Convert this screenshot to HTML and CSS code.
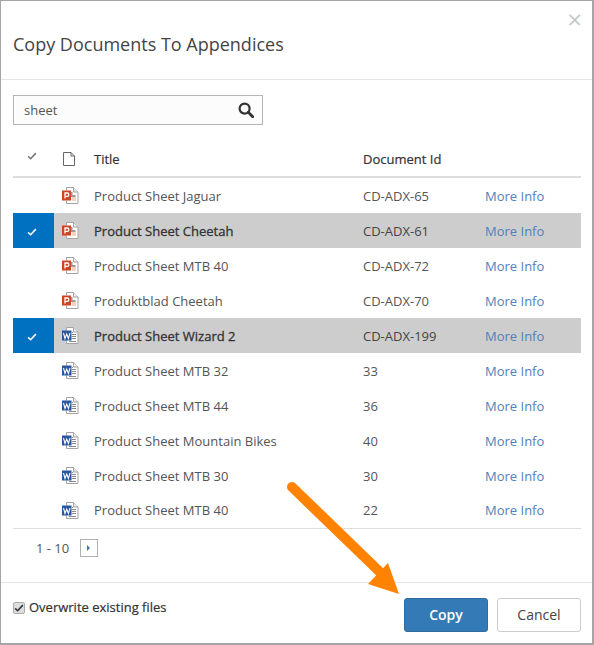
FILE: index.html
```html
<!DOCTYPE html>
<html lang="en">
<head>
    <meta charset="UTF-8">
    <title>Copy Documents To Appendices</title>
    <link rel="stylesheet" href="styles.css">
</head>
<body>
    <svg class="sprites" width="0" height="0">
        <symbol id="tick" viewBox="0 0 12 10">
            <path d="M1.2 5.4 4.3 8.4 10.8 1.4" fill="none" stroke="currentColor" stroke-width="2"/>
        </symbol>
        <symbol id="ppt" viewBox="0 0 17 17">
            <path d="M4.5 3.500V.5h7l4.500 4.500v11.500H4.500V13.500" fill="#fff" stroke="#a3a3a3"/>
            <path d="M11.500.5V5H16" fill="#eee" stroke="#a3a3a3"/>
            <path d="M8.500 5h2v3h3v2h-5z" fill="#9a9a9a"/>
            <path d="M10 11h4M10 13h4" stroke="#f0a585"/>
            <rect x="0" y="3.500" width="9" height="10" fill="#d04423"/>
            <path d="M3 11.500V6h2.200a1.600 1.600 0 0 1 0 3.400H3" fill="none" stroke="#fff" stroke-width="1.300"/>
        </symbol>
        <symbol id="doc" viewBox="0 0 17 17">
            <path d="M4.500 3.500V.5h7l4.500 4.500v11.500H4.500V13.500" fill="#fff" stroke="#a3a3a3"/>
            <path d="M11.500.5V5H16" fill="#eee" stroke="#a3a3a3"/>
            <path d="M10 5.500h1M10 7.500h4M10 9.500h4M10 11.500h4M7 14.500h7" stroke="#8a8a8a"/>
            <rect x="0" y="3.500" width="9.500" height="10" fill="#27569f"/>
            <path d="M1.500 6 3 11.500 4.700 7 6.400 11.500 8 6" fill="none" stroke="#fff" stroke-width="1.100"/>
        </symbol>
    </svg>

    <div class="dialog">
        <header class="dialog-head">
            <h1>Copy Documents To Appendices</h1>
            <span class="close">&times;</span>
        </header>

        <div class="dialog-body">
            <div class="search">
                <span class="search-text">sheet</span>
                <svg class="search-icon" viewBox="0 0 16 16" width="16" height="16">
                    <circle cx="6.600" cy="6.600" r="5" fill="none" stroke="#333" stroke-width="2.200"/>
                    <path d="M10.300 10.300 14.700 14.700" stroke="#333" stroke-width="2.800" stroke-linecap="round"/>
                </svg>
            </div>

            <table class="docs">
                <thead>
                    <tr>
                        <th class="col-check"><svg class="tick tick-head"><use href="#tick"/></svg></th>
                        <th class="col-icon">
                            <svg class="file-head" viewBox="0 0 12 14" width="12" height="14">
                                <path d="M.5.5h7.500l3.500 3.500v9.500H.5zM8 .5V4h3.500" fill="none" stroke="#666"/>
                            </svg>
                        </th>
                        <th class="col-title">Title</th>
                        <th class="col-id">Document Id</th>
                        <th class="col-more"></th>
                    </tr>
                </thead>
                <tbody>
                    <tr>
                        <td class="col-check"></td>
                        <td class="col-icon"><svg class="file"><use href="#ppt"/></svg></td>
                        <td>Product Sheet Jaguar</td>
                        <td>CD-ADX-65</td>
                        <td><a href="#">More Info</a></td>
                    </tr>
                    <tr class="selected">
                        <td class="col-check"><svg class="tick"><use href="#tick"/></svg></td>
                        <td class="col-icon"><svg class="file"><use href="#ppt"/></svg></td>
                        <td class="name">Product Sheet Cheetah</td>
                        <td>CD-ADX-61</td>
                        <td><a href="#">More Info</a></td>
                    </tr>
                    <tr>
                        <td class="col-check"></td>
                        <td class="col-icon"><svg class="file"><use href="#ppt"/></svg></td>
                        <td>Product Sheet MTB 40</td>
                        <td>CD-ADX-72</td>
                        <td><a href="#">More Info</a></td>
                    </tr>
                    <tr>
                        <td class="col-check"></td>
                        <td class="col-icon"><svg class="file"><use href="#ppt"/></svg></td>
                        <td>Produktblad Cheetah</td>
                        <td>CD-ADX-70</td>
                        <td><a href="#">More Info</a></td>
                    </tr>
                    <tr class="selected">
                        <td class="col-check"><svg class="tick"><use href="#tick"/></svg></td>
                        <td class="col-icon"><svg class="file"><use href="#doc"/></svg></td>
                        <td class="name">Product Sheet Wizard 2</td>
                        <td>CD-ADX-199</td>
                        <td><a href="#">More Info</a></td>
                    </tr>
                    <tr>
                        <td class="col-check"></td>
                        <td class="col-icon"><svg class="file"><use href="#doc"/></svg></td>
                        <td>Product Sheet MTB 32</td>
                        <td>33</td>
                        <td><a href="#">More Info</a></td>
                    </tr>
                    <tr>
                        <td class="col-check"></td>
                        <td class="col-icon"><svg class="file"><use href="#doc"/></svg></td>
                        <td>Product Sheet MTB 44</td>
                        <td>36</td>
                        <td><a href="#">More Info</a></td>
                    </tr>
                    <tr>
                        <td class="col-check"></td>
                        <td class="col-icon"><svg class="file"><use href="#doc"/></svg></td>
                        <td>Product Sheet Mountain Bikes</td>
                        <td>40</td>
                        <td><a href="#">More Info</a></td>
                    </tr>
                    <tr>
                        <td class="col-check"></td>
                        <td class="col-icon"><svg class="file"><use href="#doc"/></svg></td>
                        <td>Product Sheet MTB 30</td>
                        <td>30</td>
                        <td><a href="#">More Info</a></td>
                    </tr>
                    <tr>
                        <td class="col-check"></td>
                        <td class="col-icon"><svg class="file"><use href="#doc"/></svg></td>
                        <td>Product Sheet MTB 40</td>
                        <td>22</td>
                        <td><a href="#">More Info</a></td>
                    </tr>
                </tbody>
            </table>

            <div class="pager">
                <span>1 - 10</span>
                <span class="pager-next"></span>
            </div>
        </div>

        <footer class="dialog-foot">
            <label class="overwrite">
                <span class="checkbox"><svg class="tick"><use href="#tick"/></svg></span>
                Overwrite existing files
            </label>
            <div class="actions">
                <button class="btn btn-primary">Copy</button>
                <button class="btn">Cancel</button>
            </div>
        </footer>

        <!-- callout drawn on top of the screenshot -->
        <svg class="callout" viewBox="0 0 130 125" width="130" height="125">
            <path d="M11 9 102 97" stroke="#ff8300" stroke-width="10" stroke-linecap="round"/>
            <path d="M118 116 107 85 87 106z" fill="#ff8300"/>
        </svg>
    </div>
</body>
</html>
```
FILE: styles.css
```css
* {
    box-sizing: border-box;
}
body {
    margin: 0;
    background: #fff;
    font-family: "Open Sans", sans-serif;
    font-size: 13px;
    color: #555;
}
.sprites {
    display: block;
    position: absolute;
}
.dialog {
    position: relative;
    width: 594px;
    height: 645px;
    border: 1px solid #a5a5a5;
    border-width: 1px 2px 2px 1px;
    background: #fff;
}
.dialog-head {
    display: flex;
    justify-content: space-between;
    height: 79px;
    padding: 0 10px 0 12px;
    border-bottom: 1px solid #e5e5e5;
}
.dialog-head h1 {
    margin: 30px 0 0;
    font-size: 18px;
    line-height: 26px;
    font-weight: 400;
    color: #444;
}
.close {
    margin-top: 3px;
    font-size: 26px;
    line-height: 30px;
    color: #c8c8c8;
}
.dialog-body {
    height: 503px;
    padding: 15px 11px 0 12px;
    border-bottom: 1px solid #e5e5e5;
}
.search {
    display: flex;
    align-items: center;
    justify-content: space-between;
    width: 250px;
    height: 30px;
    padding: 0 8px 0 10px;
    border: 1px solid #b5b5b5;
    background: #fcfcfc;
}
.search-text {
    font-size: 13px;
    color: #555;
}
.docs {
    width: 568px;
    margin-top: 20px;
    border-collapse: separate;
    border-spacing: 0;
    table-layout: fixed;
}
.docs th {
    height: 33px;
    padding: 0 0 3px;
    border-bottom: 2px solid #ddd;
    text-align: left;
    font-weight: 400;
    color: #333;
    -webkit-text-stroke: 0.200px #333;
}
.docs td {
    height: 35px;
    padding: 0;
    white-space: nowrap;
}
.docs tbody tr:last-child td {
    height: 36px;
    padding-bottom: 1px;
    border-bottom: 1px solid #ddd;
}
.col-check {
    width: 41px;
    text-align: center;
}
.docs .col-check {
    text-align: center;
}
.col-icon {
    width: 40px;
}
.docs th.col-icon {
    padding-left: 9px;
}
.docs td.col-icon {
    padding-left: 8px;
}
.col-title {
    width: 269px;
}
.col-id {
    width: 122px;
}
.col-more {
    width: 96px;
}
.tick {
    display: inline-block;
    width: 10px;
    height: 8px;
    margin-left: -3px;
    vertical-align: middle;
    color: #fff;
}
.tick-head {
    margin-top: -9px;
    color: #777;
}
.file {
    display: block;
    width: 17px;
    height: 17px;
}
.file-head {
    display: block;
}
.docs a {
    color: #4f81bd;
    text-decoration: none;
}
.selected td {
    background: #cdcdcd;
    color: #444;
}
.selected .col-check {
    background: #0070c0;
}
.selected .name {
    color: #333;
    -webkit-text-stroke: 0.300px #333;
}
.pager {
    display: flex;
    align-items: center;
    gap: 11px;
    margin-top: 10px;
    padding-left: 23px;
    height: 18px;
}
.pager-next {
    position: relative;
    width: 18px;
    height: 18px;
    border: 1px solid #b0b0b0;
}
.pager-next::after {
    content: "";
    position: absolute;
    left: 6px;
    top: 5px;
    border-left: 3px solid #3d78b8;
    border-top: 3px solid transparent;
    border-bottom: 3px solid transparent;
}
.dialog-foot {
    display: flex;
    justify-content: space-between;
    padding: 15px 11px 0 12px;
}
.overwrite {
    display: flex;
    align-items: center;
    gap: 4px;
    height: 18px;
    font-size: 13px;
    color: #333;
    -webkit-text-stroke: 0.200px #333;
}
.checkbox {
    display: flex;
    align-items: center;
    justify-content: center;
    width: 12px;
    height: 12px;
    margin-top: 2px;
    border: 1px solid #aaa;
    border-radius: 2px;
    background: #ddd;
}
.checkbox .tick {
    width: 10px;
    height: 8px;
    margin-left: 0;
    color: #333;
}
.actions {
    display: flex;
    gap: 9px;
}
.btn {
    width: 84px;
    height: 34px;
    padding: 0 0 2px;
    border: 1px solid #ccc;
    border-radius: 3px;
    background: #fff;
    font-family: inherit;
    font-size: 14px;
    color: #444;
}
.btn-primary {
    border-color: #2e6da4;
    background: #337ab7;
    color: #fff;
    font-weight: 600;
}
.callout {
    position: absolute;
    left: 280px;
    top: 477px;
}
```
